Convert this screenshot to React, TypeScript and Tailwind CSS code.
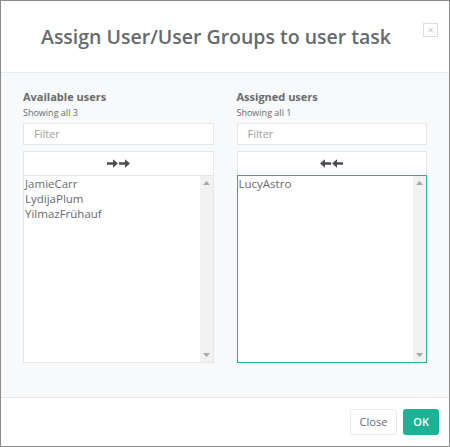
import React from 'react';

const available = ['JamieCarr', 'LydijaPlum', 'YilmazFrühauf'];
const assigned = ['LucyAstro'];

function Arrow({ dir }: { dir: 'left' | 'right' }) {
  return (
    <svg width="11" height="9" viewBox="0 0 11 9" className={dir === 'left' ? 'rotate-180' : ''}>
      <path d="M0 3.2h6V0.3L11 4.5 6 8.7V5.8H0z" fill="#4d4d4d" />
    </svg>
  );
}

function Scrollbar() {
  return (
    <div className="flex w-[13px] flex-col items-center justify-between bg-[#f1f1f1] py-[5px]">
      <svg width="7" height="4" viewBox="0 0 7 4">
        <path d="M0 4L3.5 0 7 4z" fill="#a8a8a8" />
      </svg>
      <svg width="7" height="4" viewBox="0 0 7 4">
        <path d="M0 0h7L3.5 4z" fill="#a8a8a8" />
      </svg>
    </div>
  );
}

function UserList({ title, count, items, dir, focused }: { title: string; count: number; items: string[]; dir: 'left' | 'right'; focused?: boolean }) {
  return (
    <div className="flex flex-col">
      <p className="text-[11px] font-bold leading-[14px] text-[#676a6c]">{title}</p>
      <p className="mt-[3px] text-[9px] leading-[12px] text-[#676a6c]">Showing all {count}</p>
      <div className="mt-[4px] flex h-[22px] items-center border border-[#e5e6e7] bg-white pl-[10px] text-[11px] text-[#a0a0a0]">Filter</div>
      <div className="mt-[6px] flex h-[24px] items-center justify-center gap-px border border-b-0 border-[#e5e6e7] bg-white">
        <Arrow dir={dir} />
        <Arrow dir={dir} />
      </div>
      <div className={`flex h-[188px] border bg-white ${focused ? 'border-[#1ab394]' : 'border-[#e5e6e7]'}`}>
        <div className="flex-1 pl-[1px] text-[11.5px] leading-[15px] text-[#676a6c]">
          {items.map((item) => (
            <div key={item}>{item}</div>
          ))}
        </div>
        <Scrollbar />
      </div>
    </div>
  );
}

export default function App() {
  return (
    <div className="flex h-[447px] w-[450px] flex-col border border-[#8a8a8a] bg-white font-['Open_Sans',sans-serif]">
      <div className="relative flex h-[72px] items-center justify-center border-b border-[#e7eaec]">
        <h2 className="pr-[18px] text-[19.5px] font-semibold text-[#676a6c]">Assign User/User Groups to user task</h2>
        <div className="absolute right-[11px] top-[22px] flex h-[14px] w-[15px] items-center justify-center border border-[#dcdcdc] text-[10px] leading-none text-[#c2c2c2]">×</div>
      </div>
      <div className="grid flex-1 grid-cols-2 gap-[23px] bg-[#f8f9fa] px-[22px] pt-[17px]">
        <UserList title="Available users" count={3} items={available} dir="right" />
        <UserList title="Assigned users" count={1} items={assigned} dir="left" focused />
      </div>
      <div className="flex h-[49px] items-center justify-end gap-[6px] border-t border-[#e7eaec] pr-[10px]">
        <button className="h-[26px] rounded-[3px] border border-[#e7eaec] bg-white px-[9px] text-[11px] text-[#676a6c]">Close</button>
        <button className="h-[26px] rounded-[3px] bg-[#1ab394] px-[10px] text-[11px] font-semibold text-white">OK</button>
      </div>
    </div>
  );
}
